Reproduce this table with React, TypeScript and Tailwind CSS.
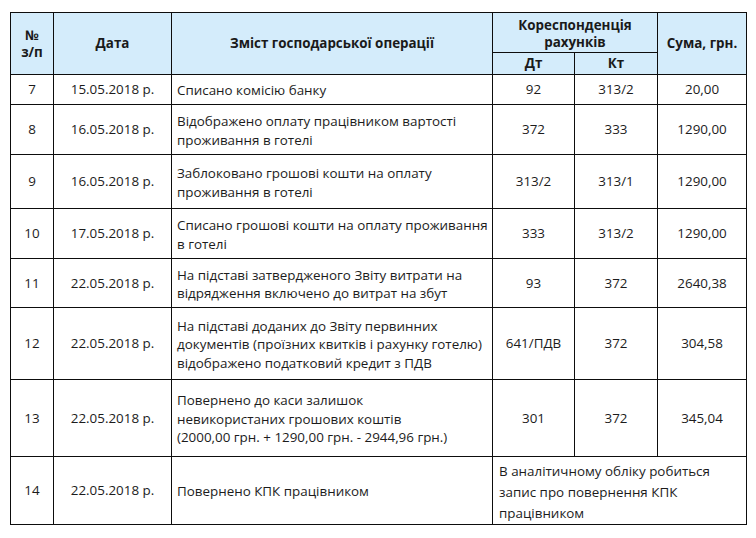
const rows: {
  n: string;
  date: string;
  text: string[];
  dt?: string;
  kt?: string;
  sum?: string;
  note?: string[];
  h: string;
}[] = [
  { n: "7", date: "15.05.2018 р.", text: ["Списано комісію банку"], dt: "92", kt: "313/2", sum: "20,00", h: "h-[30px]" },
  {
    n: "8",
    date: "16.05.2018 р.",
    text: ["Відображено оплату працівником вартості", "проживання в готелі"],
    dt: "372",
    kt: "333",
    sum: "1290,00",
    h: "h-[50px]",
  },
  {
    n: "9",
    date: "16.05.2018 р.",
    text: ["Заблоковано грошові кошти на оплату", "проживання в готелі"],
    dt: "313/2",
    kt: "313/1",
    sum: "1290,00",
    h: "h-[54px]",
  },
  {
    n: "10",
    date: "17.05.2018 р.",
    text: ["Списано грошові кошти на оплату проживання", "в готелі"],
    dt: "333",
    kt: "313/2",
    sum: "1290,00",
    h: "h-[50px]",
  },
  {
    n: "11",
    date: "22.05.2018 р.",
    text: ["На підставі затвердженого Звіту витрати на", "відрядження включено до витрат на збут"],
    dt: "93",
    kt: "372",
    sum: "2640,38",
    h: "h-[49px]",
  },
  {
    n: "12",
    date: "22.05.2018 р.",
    text: [
      "На підставі доданих до Звіту первинних",
      "документів (проїзних квитків і рахунку готелю)",
      "відображено податковий кредит з ПДВ",
    ],
    dt: "641/ПДВ",
    kt: "372",
    sum: "304,58",
    h: "h-[72px]",
  },
  {
    n: "13",
    date: "22.05.2018 р.",
    text: [
      "Повернено до каси залишок",
      "невикористаних грошових коштів",
      "(2000,00 грн. + 1290,00 грн. - 2944,96 грн.)",
    ],
    dt: "301",
    kt: "372",
    sum: "345,04",
    h: "h-[77px]",
  },
  {
    n: "14",
    date: "22.05.2018 р.",
    text: ["Повернено КПК працівником"],
    note: ["В аналітичному обліку робиться", "запис про повернення КПК", "працівником"],
    h: "h-[67px]",
  },
];

const cell = "border border-[#0d0d0d] align-middle";

export default function App() {
  return (
    <div className="h-[538px] w-[756px] bg-white pl-[10px] pt-[12px] font-['Open_Sans',sans-serif] text-[13.4px] leading-[18.5px] text-[#1c1c1c]">
      <table className="w-[736px] table-fixed border-collapse">
        <colgroup>
          <col className="w-[43px]" />
          <col className="w-[118px]" />
          <col className="w-[321px]" />
          <col className="w-[82px]" />
          <col className="w-[83px]" />
          <col className="w-[89px]" />
        </colgroup>
        <thead className="bg-[#d4ecfb] font-bold text-[#1a1a1a]">
          <tr className="h-[40px]">
            <th rowSpan={2} className={`${cell} text-center leading-[17px]`}>
              №
              <br />
              з/п
            </th>
            <th rowSpan={2} className={`${cell} text-center`}>
              Дата
            </th>
            <th rowSpan={2} className={`${cell} text-center`}>
              Зміст господарської операції
            </th>
            <th colSpan={2} className={`${cell} pt-[2px] text-center leading-[17px]`}>
              Кореспонденція
              <br />
              рахунків
            </th>
            <th rowSpan={2} className={`${cell} text-center`}>
              Сума, грн.
            </th>
          </tr>
          <tr className="h-[22px]">
            <th className={`${cell} text-center`}>Дт</th>
            <th className={`${cell} text-center`}>Кт</th>
          </tr>
        </thead>
        <tbody>
          {rows.map((r) => (
            <tr key={r.n} className={r.h}>
              <td className={`${cell} text-center`}>{r.n}</td>
              <td className={`${cell} text-center`}>{r.date}</td>
              <td className={`${cell} px-[5px] pt-[2px]`}>
                {r.text.map((t, i) => (
                  <div key={i} className="whitespace-nowrap">
                    {t}
                  </div>
                ))}
              </td>
              {r.note ? (
                <td colSpan={3} className={`${cell} px-[6px] pt-[4px] leading-[21px]`}>
                  {r.note.map((t, i) => (
                    <div key={i} className="whitespace-nowrap">
                      {t}
                    </div>
                  ))}
                </td>
              ) : (
                <>
                  <td className={`${cell} text-center`}>{r.dt}</td>
                  <td className={`${cell} text-center`}>{r.kt}</td>
                  <td className={`${cell} text-center`}>{r.sum}</td>
                </>
              )}
            </tr>
          ))}
        </tbody>
      </table>
    </div>
  );
}
